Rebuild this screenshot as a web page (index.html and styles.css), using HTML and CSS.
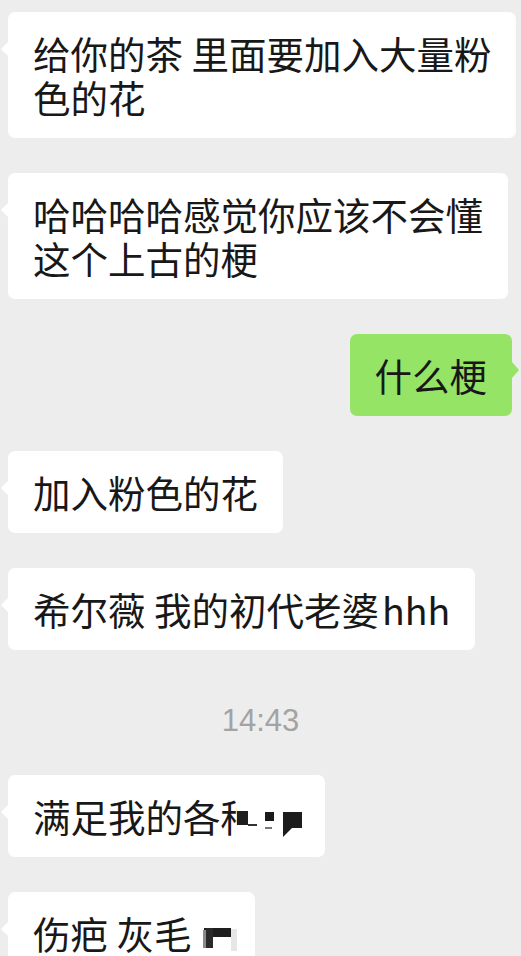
FILE: index.html
```html
<!DOCTYPE html>
<html lang="zh-CN">
<head>
<meta charset="utf-8">
<title>聊天记录</title>
<link rel="stylesheet" href="styles.css">
</head>
<body>
<div class="chat">
  <div class="row left"><div class="bubble">给你的茶 里面要加入大量粉<br>色的花</div></div>
  <div class="row left"><div class="bubble">哈哈哈哈感觉你应该不会懂<br>这个上古的梗</div></div>
  <div class="row right"><div class="bubble mine">什么梗</div></div>
  <div class="row left"><div class="bubble">加入粉色的花</div></div>
  <div class="row left"><div class="bubble">希尔薇 我的初代老婆<span class="latin">hhh</span></div></div>
  <div class="time">14:43</div>
  <div class="row left"><div class="bubble">满足我的各种<span class="gap g1"></span><span class="mask m-cover"></span><span class="mask m-a"></span><span class="mask m-line"></span><span class="mask m-b"></span><span class="mask m-dash"></span><span class="mask m-c"></span><span class="mask m-d"></span></div></div>
  <div class="row left"><div class="bubble">伤疤 灰毛<span class="gap g2"></span><span class="mask n-a"></span><span class="mask n-b"></span><span class="mask n-edge"></span><span class="mask n-fade"></span></div></div>
</div>
</body>
</html>
```
FILE: styles.css
```css
html, body {
  margin: 0;
  padding: 0;
  background: #ededed;
}
body {
  width: 521px;
  height: 956px;
  overflow: hidden;
  font-family: "Noto Sans CJK SC", "Noto Sans", sans-serif;
  color: #181818;
}
.chat {
  display: flex;
  flex-direction: column;
  gap: 35px;
  padding-top: 12px;
}
.row {
  display: flex;
}
.row.left {
  justify-content: flex-start;
  padding-left: 8px;
}
.row.right {
  justify-content: flex-end;
  padding-right: 9px;
}
.bubble {
  position: relative;
  background: #ffffff;
  border-radius: 7px;
  padding: 19px 25px;
  font-size: 37.5px;
  line-height: 44px;
  white-space: nowrap;
}
.latin {
  margin-left: 3px;
}
.row.left .bubble::before {
  content: "";
  position: absolute;
  left: -7px;
  top: 30px;
  border-top: 7px solid transparent;
  border-bottom: 7px solid transparent;
  border-right: 7px solid #ffffff;
}
.bubble.mine {
  background: #95e466;
}
.bubble.mine::after {
  content: "";
  position: absolute;
  right: -7px;
  top: 28px;
  border-top: 8px solid transparent;
  border-bottom: 8px solid transparent;
  border-left: 7px solid #95e466;
}
.time {
  text-align: center;
  font-family: "Liberation Sans", Arial, sans-serif;
  font-size: 31px;
  line-height: 31px;
  color: #a3a3a3;
  padding: 20px 0 4px 0;
}
.gap {
  display: inline-block;
  height: 1px;
}
.g1 { width: 42px; }
.g2 { width: 39px; }
.mask {
  position: absolute;
  display: block;
}
.m-cover { left: 229px; top: 14px; width: 24px; height: 56px; background: #ffffff; }
.m-a { left: 229px; top: 36px; width: 11px; height: 14px; background: #1e1e1e; }
.m-line { left: 240px; top: 49px; width: 9px; height: 2px; background: #333; }
.m-b { left: 257px; top: 37px; width: 9px; height: 9px; background: #1a1a1a; }
.m-dash { left: 257px; top: 52px; width: 7px; height: 2px; background: #777; }
.m-c { left: 275px; top: 37px; width: 19px; height: 16px; background: #1c1c1c; }
.m-d { left: 275px; top: 53px; width: 9px; height: 9px; background: #1c1c1c; clip-path: polygon(0 0, 100% 0, 0 100%); }
.n-a { left: 196px; top: 36px; width: 27px; height: 9px; background: #1e1e1e; }
.n-b { left: 198px; top: 36px; width: 7px; height: 20px; background: #2a2a2a; }
.n-edge { left: 195px; top: 38px; width: 3px; height: 18px; background: #8a8a8a; }
.n-fade { left: 223px; top: 37px; width: 6px; height: 22px; background: #e6e6e6; }
```
